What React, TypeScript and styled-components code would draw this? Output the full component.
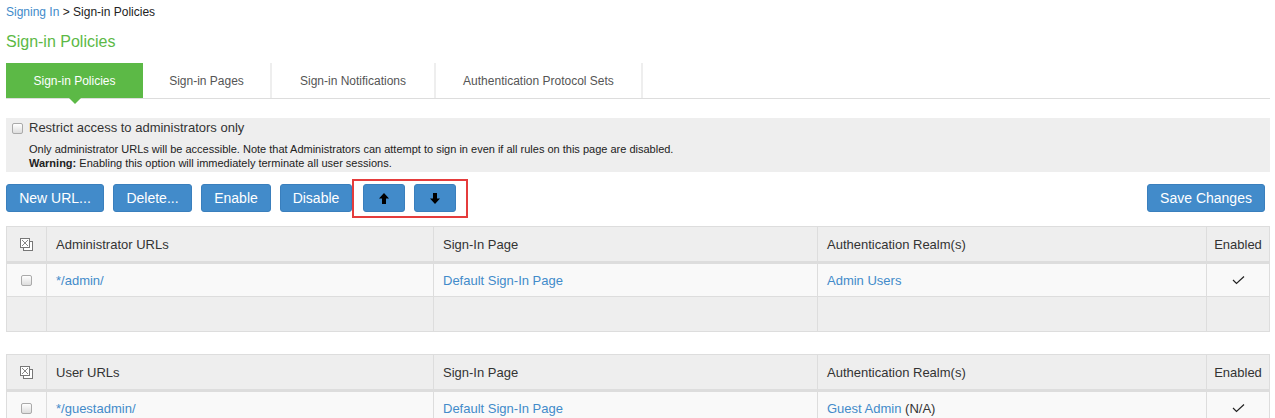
import React from 'react';
import styled, { createGlobalStyle } from 'styled-components';

const GlobalStyle = createGlobalStyle`
  html, body {
    margin: 0;
    padding: 0;
    background: #fff;
    font-family: 'Liberation Sans', Arial, sans-serif;
    color: #333;
  }
`;

const Page = styled.div`
  padding: 0 5px 0 6px;
`;

const Breadcrumb = styled.div`
  font-size: 12px;
  line-height: 14px;
  padding-top: 5px;
  color: #222;
`;

const Link = styled.a`
  color: #428bca;
  text-decoration: none;
  cursor: pointer;
`;

const Title = styled.h1`
  margin: 0;
  padding-top: 13px;
  font-size: 16px;
  line-height: 20px;
  font-weight: normal;
  color: #5cb946;
`;

const TabBar = styled.div`
  display: flex;
  margin-top: 11px;
  height: 35px;
  border-bottom: 1px solid #ddd;
`;

const Tab = styled.div<{ $active?: boolean; $width: number }>`
  position: relative;
  width: ${p => p.$width}px;
  display: flex;
  align-items: center;
  justify-content: center;
  font-size: 12px;
  color: ${p => (p.$active ? '#fff' : '#555')};
  background: ${p => (p.$active ? '#5cb946' : 'transparent')};
  border-right: ${p => (p.$active ? 'none' : '2px solid #eee')};
  box-sizing: border-box;

  ${p =>
    p.$active &&
    `
    &::after {
      content: '';
      position: absolute;
      left: 50%;
      bottom: -6px;
      margin-left: -6px;
      border-left: 6px solid transparent;
      border-right: 6px solid transparent;
      border-top: 6px solid #5cb946;
    }
  `}
`;

const Notice = styled.div`
  margin-top: 19px;
  background: #eee;
  padding: 2px 0 4px 6px;
  height: 54px;
  box-sizing: border-box;
`;

const NoticeRow = styled.label`
  display: flex;
  align-items: center;
  gap: 6px;
  font-size: 13px;
  line-height: 16px;
`;

const Check = styled.span`
  display: inline-block;
  width: 9px;
  height: 9px;
  border: 1px solid #aaa;
  border-radius: 2px;
  background: linear-gradient(#fff, #ddd);
  flex-shrink: 0;
`;

const NoticeText = styled.div`
  padding-left: 17px;
  padding-top: 6px;
  font-size: 11px;
  line-height: 14px;
  color: #222;
`;

const Toolbar = styled.div`
  display: flex;
  align-items: center;
  margin-top: 11px;
  margin-right: 5px;
  height: 30px;
`;

const Button = styled.button<{ $w: number; $gap?: number }>`
  width: ${p => p.$w}px;
  height: 28px;
  margin-right: ${p => p.$gap ?? 9}px;
  border: 1px solid #3a7fbd;
  border-radius: 3px;
  background: #428bca;
  color: #fff;
  font-family: 'Liberation Sans', Arial, sans-serif;
  font-size: 14px;
  display: flex;
  align-items: center;
  justify-content: center;
  padding: 0;
`;

const Highlight = styled.div`
  display: flex;
  align-items: center;
  gap: 9px;
  margin-left: -9px;
  padding: 0 10px 0 9px;
  height: 39px;
  border: 2px solid #e53c3c;
  box-sizing: border-box;
`;

const Spacer = styled.div`
  flex: 1;
`;

const Table = styled.div<{ $top: number }>`
  margin-top: ${p => p.$top}px;
  border: 1px solid #ddd;
  border-bottom: none;
`;

const Row = styled.div<{ $bg: string; $thick?: boolean }>`
  display: grid;
  grid-template-columns: 40px 387px 384px 389px 1fr;
  height: 35px;
  background: ${p => p.$bg};
  border-top: ${p => (p.$thick ? '2px solid #ddd' : 'none')};
  border-bottom: 1px solid #ddd;
  box-sizing: border-box;
`;

const Cell = styled.div<{ $center?: boolean }>`
  display: flex;
  align-items: center;
  justify-content: ${p => (p.$center ? 'center' : 'flex-start')};
  padding-left: ${p => (p.$center ? 0 : 9)}px;
  border-right: 1px solid #ddd;
  font-size: 13px;
  color: #333;
  &:last-child {
    border-right: none;
  }
`;

const SelectAllIcon = () => (
  <svg width="13" height="13" viewBox="0 0 13 13">
    <rect x="3.5" y="3.5" width="9" height="9" fill="#fff" stroke="#777" />
    <rect x="0.5" y="0.5" width="9" height="9" fill="#fff" stroke="#777" />
    <path d="M2 2 L8 8 M8 2 L2 8" stroke="#888" strokeWidth="1" />
  </svg>
);

const Arrow = ({ down }: { down?: boolean }) => (
  <svg width="10" height="11" viewBox="0 0 10 11" style={down ? { transform: 'rotate(180deg)' } : undefined}>
    <path d="M5 0 L10 5.5 L7 5.5 L7 11 L3 11 L3 5.5 L0 5.5 Z" fill="#000" />
  </svg>
);

const Tick = () => (
  <svg width="13" height="10" viewBox="0 0 13 10">
    <path d="M1 5 L4.5 8.5 L12 1.5" fill="none" stroke="#222" strokeWidth="1.2" />
  </svg>
);

type Policy = { url: string; page: string; realm: string; suffix?: string };

const PolicyTable = ({ title, rows, top, filler }: { title: string; rows: Policy[]; top: number; filler?: boolean }) => (
  <Table $top={top}>
    <Row $bg="#eee">
      <Cell $center>
        <SelectAllIcon />
      </Cell>
      <Cell>{title}</Cell>
      <Cell>Sign-In Page</Cell>
      <Cell>Authentication Realm(s)</Cell>
      <Cell $center>Enabled</Cell>
    </Row>
    {rows.map((r, i) => (
      <Row key={r.url} $bg="#f9f9f9" $thick={i === 0}>
        <Cell $center>
          <Check />
        </Cell>
        <Cell>
          <Link>{r.url}</Link>
        </Cell>
        <Cell>
          <Link>{r.page}</Link>
        </Cell>
        <Cell>
          <Link>{r.realm}</Link>
          {r.suffix && <span>&nbsp;{r.suffix}</span>}
        </Cell>
        <Cell $center>
          <Tick />
        </Cell>
      </Row>
    ))}
    {filler && (
      <Row $bg="#eee">
        <Cell />
        <Cell />
        <Cell />
        <Cell />
        <Cell />
      </Row>
    )}
  </Table>
);

const tabs = [
  { label: 'Sign-in Policies', width: 137 },
  { label: 'Sign-in Pages', width: 129 },
  { label: 'Sign-in Notifications', width: 164 },
  { label: 'Authentication Protocol Sets', width: 207 },
];

export default function App() {
  return (
    <Page>
      <GlobalStyle />
      <Breadcrumb>
        <Link>Signing In</Link> &gt; Sign-in Policies
      </Breadcrumb>
      <Title>Sign-in Policies</Title>
      <TabBar>
        {tabs.map((t, i) => (
          <Tab key={t.label} $active={i === 0} $width={t.width}>
            {t.label}
          </Tab>
        ))}
      </TabBar>
      <Notice>
        <NoticeRow>
          <Check />
          Restrict access to administrators only
        </NoticeRow>
        <NoticeText>
          Only administrator URLs will be accessible. Note that Administrators can attempt to sign in even if all rules on this page are disabled.
          <br />
          <b>Warning:</b> Enabling this option will immediately terminate all user sessions.
        </NoticeText>
      </Notice>
      <Toolbar>
        <Button $w={98}>New URL...</Button>
        <Button $w={79}>Delete...</Button>
        <Button $w={70}>Enable</Button>
        <Button $w={72}>Disable</Button>
        <Highlight>
          <Button $w={42} $gap={0}>
            <Arrow />
          </Button>
          <Button $w={42} $gap={0}>
            <Arrow down />
          </Button>
        </Highlight>
        <Spacer />
        <Button $w={118} $gap={0}>
          Save Changes
        </Button>
      </Toolbar>
      <PolicyTable
        title="Administrator URLs"
        top={13}
        filler
        rows={[{ url: '*/admin/', page: 'Default Sign-In Page', realm: 'Admin Users' }]}
      />
      <PolicyTable
        title="User URLs"
        top={22}
        rows={[{ url: '*/guestadmin/', page: 'Default Sign-In Page', realm: 'Guest Admin', suffix: '(N/A)' }]}
      />
    </Page>
  );
}
